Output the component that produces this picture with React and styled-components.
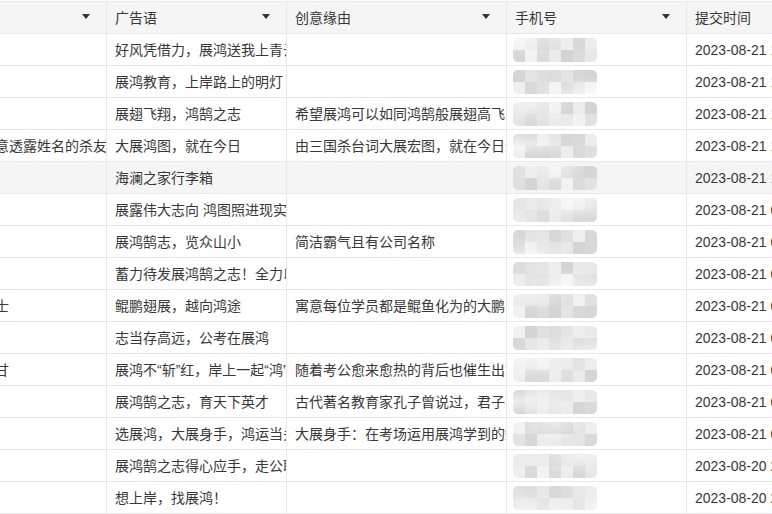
import React, { useLayoutEffect, useRef } from "react";
import styled, { createGlobalStyle } from "styled-components";

const GlobalStyle = createGlobalStyle`
  html, body { margin: 0; padding: 0; background: #fff; }
  body { font-family: "Liberation Sans", "Noto Sans CJK SC", sans-serif; }
`;

const COLS = "148px 180px 220px 180px 200px";
const LINE = "#e8e8e8";

const Page = styled.div`
  padding-top: 1px;
  width: 772px;
  height: 514px;
  box-sizing: border-box;
  overflow: hidden;
`;

const Scroller = styled.div`
  overflow-x: auto;
  overflow-y: hidden;
  scrollbar-width: none;
  &::-webkit-scrollbar { display: none; }
`;

const Table = styled.div`
  width: 928px;
`;

const Row = styled.div`
  display: grid;
  grid-template-columns: ${COLS};
  height: ${(p) => (p.$head ? 33 : 32)}px;
  box-sizing: border-box;
  border-bottom: 1px solid ${LINE};
  border-top: ${(p) => (p.$head ? `1px solid ${LINE}` : "none")};
  background: ${(p) => (p.$head || p.$hover ? "#f5f5f5" : "#fff")};
`;

const Cell = styled.div`
  box-sizing: border-box;
  border-right: 1px solid ${LINE};
  padding: 0 8px;
  display: flex;
  align-items: center;
  overflow: hidden;
  white-space: nowrap;
  font-size: 14px;
  line-height: 20px;
  color: #383838;
`;

const HeadCell = styled(Cell)`
  justify-content: space-between;
  padding-right: 16px;
`;

const Caret = styled.span`
  width: 0;
  height: 0;
  flex: none;
  margin-top: -3px;
  border-left: 4px solid transparent;
  border-right: 4px solid transparent;
  border-top: 5px solid #333;
`;

const Mosaic = styled.div`
  position: relative;
  margin-left: -2px;
  display: grid;
  grid-template-columns: repeat(7, 12px);
  grid-template-rows: repeat(2, 12px);
  filter: blur(0.5px);
  border-radius: 5px;
  overflow: hidden;
  &::after {
    content: "";
    position: absolute;
    inset: -4px;
    background: radial-gradient(
      ellipse at ${(p) => p.$blob},
      rgba(255, 255, 255, 0.6),
      rgba(255, 255, 255, 0) 50%
    );
  }
`;

const Px = styled.span`
  background: ${(p) => `rgb(${p.$v},${p.$v},${p.$v})`};
`;

function shade(r, i) {
  const v = Math.sin(r * 12.9898 + i * 78.233) * 43758.5453;
  const f = v - Math.floor(v);
  return Math.round(0xd3 + f * (0xf2 - 0xd3));
}

const blobs = ["10% 0%", "90% 100%", "20% 10%", "0% 50%", "50% 0%", "80% 20%", "10% 100%", "60% 100%"];

const rows = [
  { name: "", slogan: "好风凭借力，展鸿送我上青云", reason: "", time: "2023-08-21 18:32:10" },
  { name: "", slogan: "展鸿教育，上岸路上的明灯", reason: "", time: "2023-08-21 17:05:44" },
  { name: "", slogan: "展翅飞翔，鸿鹄之志", reason: "希望展鸿可以如同鸿鹄般展翅高飞", time: "2023-08-21 16:48:21" },
  { name: "不愿意透露姓名的杀友", slogan: "大展鸿图，就在今日", reason: "由三国杀台词大展宏图，就在今日演变而来", time: "2023-08-21 15:12:09" },
  { name: "", slogan: "海澜之家行李箱", reason: "", time: "2023-08-21 11:20:37", hover: true },
  { name: "", slogan: "展露伟大志向 鸿图照进现实", reason: "", time: "2023-08-21 09:58:16" },
  { name: "", slogan: "展鸿鹄志，览众山小", reason: "简洁霸气且有公司名称", time: "2023-08-21 09:41:02" },
  { name: "", slogan: "蓄力待发展鸿鹄之志！全力以赴", reason: "", time: "2023-08-21 09:30:55" },
  { name: "张女士", slogan: "鲲鹏翅展，越向鸿途", reason: "寓意每位学员都是鲲鱼化为的大鹏，展翅高飞", time: "2023-08-21 08:47:13" },
  { name: "", slogan: "志当存高远，公考在展鸿", reason: "", time: "2023-08-21 08:22:40" },
  { name: "李思甘", slogan: "展鸿不“斩”红，岸上一起“鸿”运", reason: "随着考公愈来愈热的背后也催生出大批培训机构", time: "2023-08-21 07:59:31" },
  { name: "", slogan: "展鸿鹄之志，育天下英才", reason: "古代著名教育家孔子曾说过，君子不器", time: "2023-08-21 07:35:08" },
  { name: "", slogan: "选展鸿，大展身手，鸿运当头", reason: "大展身手：在考场运用展鸿学到的知识", time: "2023-08-21 06:12:47" },
  { name: "", slogan: "展鸿鹄之志得心应手，走公职之路", reason: "", time: "2023-08-20 23:44:19" },
  { name: "", slogan: "想上岸，找展鸿！", reason: "", time: "2023-08-20 21:03:52" },
];

const heads = ["姓名", "广告语", "创意缘由", "手机号"];

export default function App() {
  const ref = useRef(null);
  useLayoutEffect(() => {
    if (ref.current) ref.current.scrollLeft = 41;
  }, []);
  return (
    <>
      <GlobalStyle />
      <Page>
        <Scroller ref={ref}>
          <Table>
            <Row $head>
              {heads.map((h) => (
                <HeadCell key={h}>
                  <span>{h}</span>
                  <Caret />
                </HeadCell>
              ))}
              <Cell>提交时间</Cell>
            </Row>
            {rows.map((r, ri) => (
              <Row key={ri} $hover={r.hover}>
                <Cell>{r.name}</Cell>
                <Cell>{r.slogan}</Cell>
                <Cell>{r.reason}</Cell>
                <Cell>
                  <Mosaic $blob={blobs[ri % blobs.length]}>
                    {Array.from({ length: 14 }, (_, i) => (
                      <Px key={i} $v={shade(ri + 1, i)} />
                    ))}
                  </Mosaic>
                </Cell>
                <Cell>{r.time}</Cell>
              </Row>
            ))}
          </Table>
        </Scroller>
      </Page>
    </>
  );
}
